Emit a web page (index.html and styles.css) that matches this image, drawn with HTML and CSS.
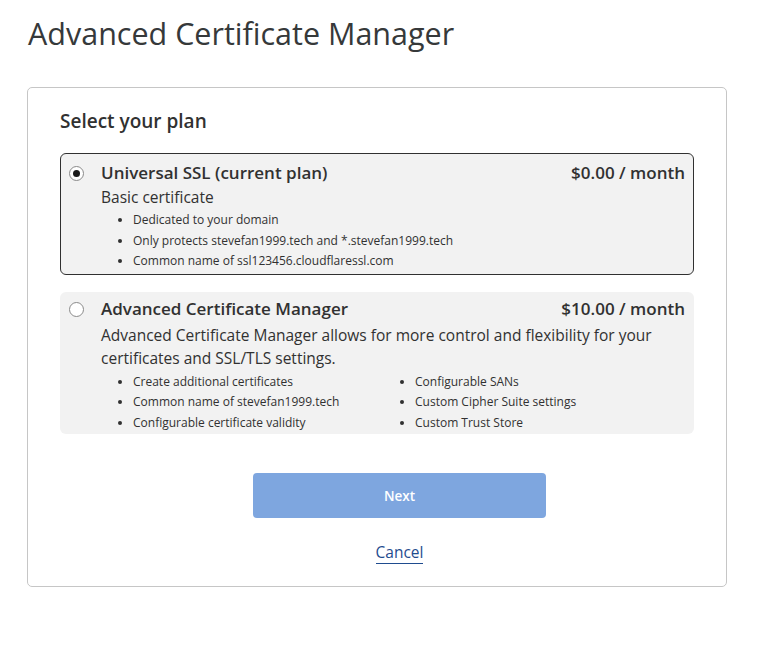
FILE: index.html
```html
<!DOCTYPE html>
<html lang="en">
<head>
    <meta charset="UTF-8">
    <meta name="viewport" content="width=device-width, initial-scale=1.0">
    <title>Advanced Certificate Manager</title>
    <link rel="stylesheet" href="styles.css">
</head>
<body>
    <h1 class="page-title">Advanced Certificate Manager</h1>

    <div class="plan-card">
        <h2 class="plan-heading">Select your plan</h2>

        <label class="plan-option selected">
            <span class="radio checked"></span>
            <div class="plan-body">
                <div class="plan-top">
                    <span class="plan-name">Universal SSL (current plan)</span>
                    <span class="plan-price">$0.00 / month</span>
                </div>
                <div class="plan-desc">Basic certificate</div>
                <ul class="plan-features">
                    <li>Dedicated to your domain</li>
                    <li>Only protects stevefan1999.tech and *.stevefan1999.tech</li>
                    <li>Common name of ssl123456.cloudflaressl.com</li>
                </ul>
            </div>
        </label>

        <label class="plan-option upgrade">
            <span class="radio"></span>
            <div class="plan-body">
                <div class="plan-top">
                    <span class="plan-name">Advanced Certificate Manager</span>
                    <span class="plan-price">$10.00 / month</span>
                </div>
                <div class="plan-desc">Advanced Certificate Manager allows for more control and flexibility for your certificates and SSL/TLS settings.</div>
                <div class="feature-cols">
                    <ul class="plan-features">
                        <li>Create additional certificates</li>
                        <li>Common name of stevefan1999.tech</li>
                        <li>Configurable certificate validity</li>
                    </ul>
                    <ul class="plan-features">
                        <li>Configurable SANs</li>
                        <li>Custom Cipher Suite settings</li>
                        <li>Custom Trust Store</li>
                    </ul>
                </div>
            </div>
        </label>

        <div class="actions">
            <button class="next-btn" disabled>Next</button>
            <a href="#" class="cancel-link">Cancel</a>
        </div>
    </div>
</body>
</html>
```

FILE: styles.css
```css
body, html {
    font-family: 'Open Sans', 'Noto Sans', sans-serif;
    margin: 0;
    padding: 0;
    background-color: #ffffff;
    color: #313131;
}
.page-title {
    margin: 0;
    padding: 13px 0 0 28px;
    font-size: 30.5px;
    font-weight: 400;
    line-height: 40px;
    color: #36393a;
}
.plan-card {
    box-sizing: border-box;
    width: 700px;
    margin: 34px 0 0 27px;
    padding: 19px 32px 22px 32px;
    border: 1px solid #c6c6c6;
    border-radius: 5px;
}
.plan-heading {
    margin: 0 0 18px 0;
    font-size: 19px;
    font-weight: 600;
    line-height: 28px;
    color: #313131;
}
.plan-option {
    display: flex;
    align-items: flex-start;
    background-color: #f2f2f2;
    border: 1px solid transparent;
    border-radius: 6px;
    padding: 6px 8px 2px 8px;
    margin-bottom: 17px;
}
.plan-option.selected {
    border-color: #313131;
}
.selected .plan-features {
    margin-top: 1px;
}
.plan-option.upgrade {
    padding-top: 3px;
    padding-bottom: 0;
}
.radio {
    flex: none;
    box-sizing: border-box;
    width: 15px;
    height: 15px;
    margin: 6px 17px 0 0;
    border: 1px solid #8a8a8a;
    border-radius: 50%;
    background-color: #ffffff;
    position: relative;
}
.radio.checked::after {
    content: "";
    position: absolute;
    left: 3px;
    top: 3px;
    width: 7px;
    height: 7px;
    border-radius: 50%;
    background-color: #1a1a1a;
}
.plan-body {
    flex: 1;
}
.plan-top {
    display: flex;
    justify-content: space-between;
    font-size: 17px;
    font-weight: 600;
    line-height: 25px;
}
.upgrade .plan-top {
    margin-bottom: 3px;
}
.plan-desc {
    font-size: 15.5px;
    line-height: 23px;
    margin-top: 1px;
}
.plan-features {
    margin: 0;
    padding-left: 32px;
    font-size: 12px;
    line-height: 20.5px;
}
.feature-cols {
    display: grid;
    grid-template-columns: 282px 1fr;
    margin-top: 2px;
}
.actions {
    display: flex;
    flex-direction: column;
    align-items: center;
    padding: 22px 0 0 45px;
}
.next-btn {
    width: 293px;
    height: 45px;
    border: none;
    border-radius: 4px;
    background-color: #7ea6df;
    color: #ffffff;
    font-family: inherit;
    font-size: 13.5px;
    font-weight: 600;
}
.cancel-link {
    margin-top: 23px;
    font-size: 15.5px;
    line-height: 22px;
    color: #1f4c8f;
    text-decoration: none;
    border-bottom: 1px solid #1f4c8f;
}
```
